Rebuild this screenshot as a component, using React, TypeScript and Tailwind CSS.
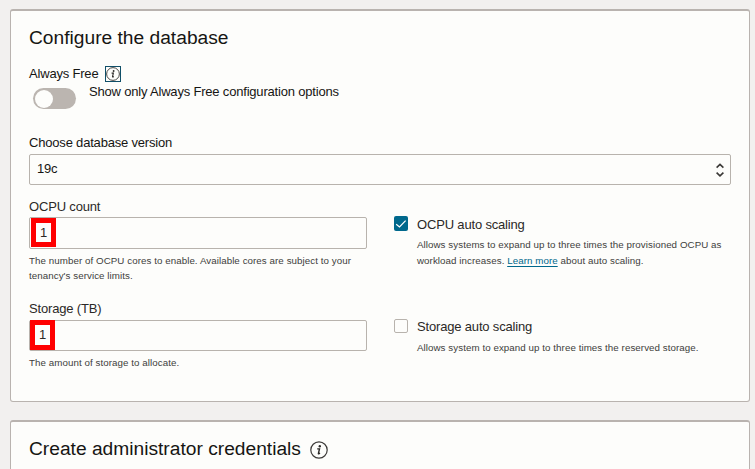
import { ReactNode } from 'react';

function InfoIcon({ className }: { className: string }) {
  return (
    <svg viewBox="0 0 18 18" className={className} fill="none">
      <circle cx="9" cy="9" r="8.2" stroke="#3c3a38" strokeWidth="1.2" />
      <circle cx="9.8" cy="5.2" r="1.2" fill="#2b2927" />
      <path d="M7.2 7.9h2.3L8.4 12.4c-.1.6.4.6 1.6-.2" stroke="#2b2927" strokeWidth="1.4" />
    </svg>
  );
}

function Label({ children }: { children: ReactNode }) {
  return <div className="h-4 whitespace-nowrap text-[13px] leading-4 tracking-[-0.17px] text-[#2b2927]">{children}</div>;
}

function Hint({ children }: { children: ReactNode }) {
  return <p className="whitespace-nowrap text-[9.75px] tracking-[0.065px] text-[#403e3c]">{children}</p>;
}

function Field({ className, mark }: { className: string; mark: string }) {
  return (
    <div className={`relative w-[338px] rounded-[2px] border border-[#b8b3ad] ${className}`}>
      <div className={`absolute flex w-[25px] items-center justify-center border-[5px] border-[#ff0000] text-[13px] leading-4 text-[#2b2927] ${mark}`}>
        1
      </div>
    </div>
  );
}

export default function App() {
  return (
    <div className="h-[469px] w-[755px] overflow-hidden bg-[#f2f0ef] pt-[9px] pl-[10px] font-['Liberation_Sans',Arial,sans-serif] text-[#161513]">
      <section className="h-[393px] w-[740px] rounded-[3px] border border-t-2 border-[#b9b3af] bg-[#fdfdfb] pr-[18px] pl-[18px]">
        <h2 className="pt-[15px] text-[19.2px] leading-6">Configure the database</h2>
        <div className="mt-4 flex h-4 items-center">
          <span className="w-[76px] whitespace-nowrap text-[13px] leading-4 tracking-[-0.19px]">Always Free</span>
          <span className="flex size-4 items-center justify-center border border-[#104f68]">
            <InfoIcon className="size-[14px]" />
          </span>
        </div>
        <div className="flex h-[27px] pt-[6px] pl-1">
          <div className="h-[21px] w-[43px] shrink-0 rounded-full bg-[#bbb5b0] px-[2px] py-[1.5px]">
            <div className="size-[18px] rounded-full bg-[#fdfdfb]" />
          </div>
          <span className="-mt-1 ml-[13px] whitespace-nowrap text-[13px] leading-4 tracking-[-0.19px]">Show only Always Free configuration options</span>
        </div>
        <div className="mt-[26px] h-[19px] text-[13px] leading-4 tracking-[-0.19px]">Choose database version</div>
        <div className="flex h-[31px] w-[702px] items-center justify-between rounded-[2px] border border-[#b8b3ad] pr-[6px] pl-[7px] text-[13px] tracking-[-0.19px]">
          <span className="-mt-px">19c</span>
          <svg viewBox="0 0 8 14" className="h-[14px] w-2" fill="none" stroke="#3a3836" strokeWidth="1.6">
            <path d="M.6 4.6 4 1.4l3.4 3.2M.6 9.6 4 12.8l3.4-3.2" />
          </svg>
        </div>
        <div className="mt-[14px] flex">
          <div className="w-[365px]">
            <Label>OCPU count</Label>
            <Field className="mt-[2px] h-[32px]" mark="top-0 left-[1px] h-[29px]" />
            <div className="mt-1 leading-[15px]">
              <Hint>The number of OCPU cores to enable. Available cores are subject to your<br />tenancy's service limits.</Hint>
            </div>
            <div className="mt-[18px]"><Label>Storage (TB)</Label></div>
            <Field className="mt-[3px] h-[31px]" mark="-top-px left-0 h-[30px]" />
            <div className="mt-1 leading-[15px]"><Hint>The amount of storage to allocate.</Hint></div>
          </div>
          <div className="pt-[17px]">
            <div className="flex">
              <span className="flex h-[15px] w-[14px] items-center justify-center rounded-[2px] bg-[#00688c]">
                <svg viewBox="0 0 12 12" className="size-3" fill="none" stroke="#fff" strokeWidth="1.2">
                  <path d="M1.2 6.3 4.5 9 10.6 2.7" />
                </svg>
              </span>
              <div className="ml-[9px] pt-px">
                <Label>OCPU auto scaling</Label>
                <div className="mt-1 leading-4">
                  <Hint>
                    Allows systems to expand up to three times the provisioned OCPU as<br />workload increases. <a className="text-[#00688c] underline underline-offset-2">Learn more</a> about auto scaling.
                  </Hint>
                </div>
              </div>
            </div>
            <div className="mt-[50px] flex">
              <span className="size-[14px] rounded-[2px] border border-[#b8b3ad]" />
              <div className="ml-[9px]">
                <Label>Storage auto scaling</Label>
                <div className="mt-[5px] leading-4"><Hint>Allows system to expand up to three times the reserved storage.</Hint></div>
              </div>
            </div>
          </div>
        </div>
      </section>
      <section className="mt-[18px] flex h-[80px] w-[740px] rounded-[3px] border border-t-2 border-[#b9b3af] bg-[#fdfdfb] pt-[15px] pl-[18px]">
        <h2 className="w-[281px] whitespace-nowrap text-[19.2px] leading-6">Create administrator credentials</h2>
        <InfoIcon className="mt-1 size-[18px]" />
      </section>
    </div>
  );
}
